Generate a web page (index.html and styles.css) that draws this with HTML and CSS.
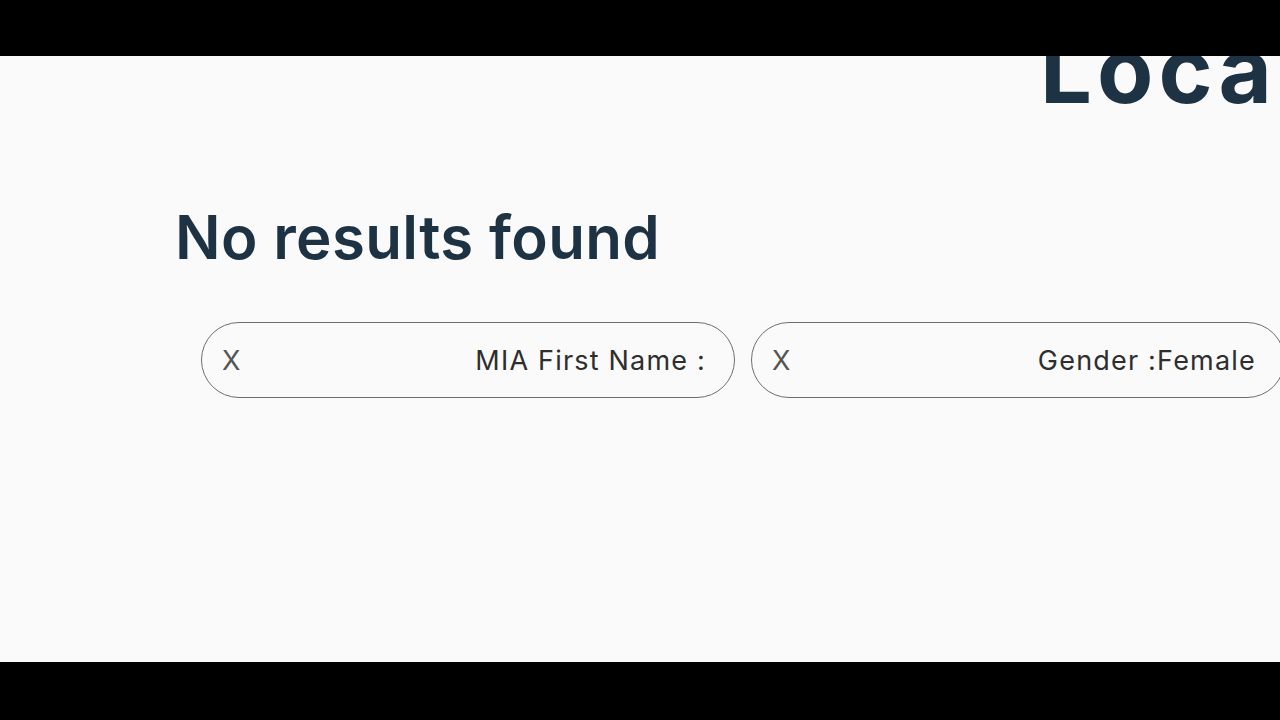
FILE: index.html
```html
<!DOCTYPE html>
<html lang="en">
<head>
<meta charset="utf-8">
<title>No results found</title>
<link rel="stylesheet" href="styles.css">
</head>
<body>
<div class="frame">
  <div class="letterbox"></div>
  <main class="screen">
    <div class="title-row">
      <h1 class="page-title">Loca</h1>
    </div>
    <h2 class="empty-title">No results found</h2>
    <div class="chips">
      <div class="chip">
        <span class="chip-x">X</span>
        <span class="chip-label">MIA First Name :</span>
      </div>
      <div class="chip">
        <span class="chip-x">X</span>
        <span class="chip-label">Gender :Female</span>
      </div>
    </div>
  </main>
  <div class="letterbox letterbox-bottom"></div>
</div>
</body>
</html>
```
FILE: styles.css
```css
html, body {
  margin: 0;
  padding: 0;
  background: #000;
}
.frame {
  width: 1280px;
  height: 720px;
  display: flex;
  flex-direction: column;
  overflow: hidden;
}
.letterbox {
  height: 56px;
  background: #000;
  flex: none;
  position: relative;
  z-index: 2;
}
.letterbox-bottom {
  height: 58px;
}
.screen {
  height: 606px;
  flex: none;
  background: #fafafa;
  overflow: hidden;
  font-family: Inter, "Noto Sans", sans-serif;
}
.title-row {
  margin-top: -32px;
  padding-left: 1040px;
  white-space: nowrap;
}
.page-title {
  margin: 0;
  font-size: 92px;
  line-height: 1;
  font-weight: 700;
  color: #1d3243;
  letter-spacing: 5px;
}
.empty-title {
  margin: 91px 0 0 175px;
  font-size: 60px;
  line-height: 1;
  font-weight: 600;
  color: #1d3243;
  letter-spacing: 0.35px;
}
.chips {
  display: flex;
  gap: 16px;
  margin: 55px 0 0 201px;
  white-space: nowrap;
}
.chip {
  flex: none;
  width: 534px;
  height: 76px;
  box-sizing: border-box;
  border: 1.5px solid #6e6e6e;
  border-radius: 38px;
  display: flex;
  align-items: center;
  justify-content: space-between;
  padding: 0 28px 0 20px;
  font-size: 27px;
  color: #2e2e2e;
}
.chip-x {
  color: #555;
  font-weight: 400;
}
.chip-label {
  color: #2e2e2e;
  letter-spacing: 1.2px;
}
```
